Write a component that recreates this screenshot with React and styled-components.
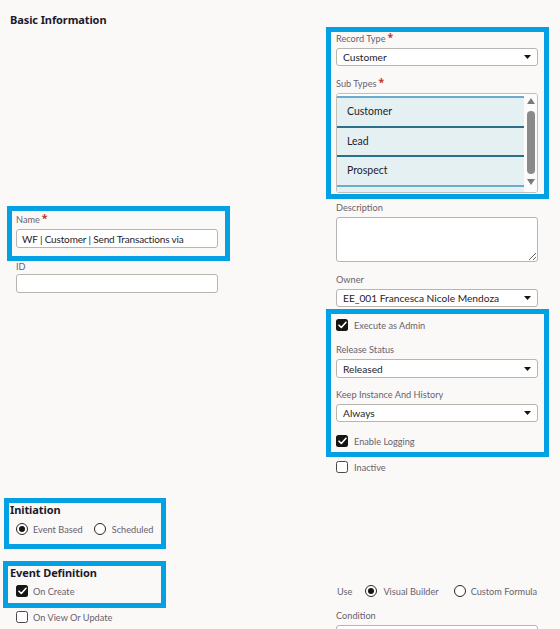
import React from 'react';
import styled, { createGlobalStyle } from 'styled-components';

const Global = createGlobalStyle`
  html, body { margin: 0; padding: 0; background: #faf9f8; }
  body { font-family: Lato, "Noto Sans", sans-serif; color: #161513; }
  * { box-sizing: border-box; }
`;

const Page = styled.div`
  width: 560px;
  height: 629px;
  overflow: hidden;
  background: #faf9f8;
  padding: 13px 0 0 16px;
`;

const Title = styled.h2`
  margin: 0 0 0 ${p => p.$indent || '-6px'};
  font-family: "Noto Sans", sans-serif;
  font-size: 11px;
  font-weight: 700;
  line-height: ${p => p.$lh || '14px'};
  height: ${p => p.$lh || '14px'};
  color: #1c1a2b;
  letter-spacing: -0.1px;
`;

const Grid = styled.div`
  display: grid;
  grid-template-columns: 202px 202px;
  column-gap: 118px;
  align-items: start;
  margin-top: ${p => p.$mt || '0'};
`;

const Column = styled.div`
  display: flex;
  flex-direction: column;
  padding-top: ${p => p.$pt || '0'};
`;

const Highlight = styled.div`
  border: 5px solid #02a1e4;
  margin: ${p => p.$m};
  padding: ${p => p.$p};
  width: ${p => p.$w || 'auto'};
`;

const Label = styled.div`
  font-size: 9.2px;
  line-height: 12px;
  height: 12px;
  color: #67626e;
  margin-top: ${p => p.$mt || '0'};
  margin-bottom: ${p => p.$mb || '3px'};
  white-space: nowrap;
`;

const Req = styled.span`
  font-family: "Noto Sans", sans-serif;
  color: #c5352b;
  font-size: 10.5px;
  font-weight: 700;
  line-height: 0;
  margin-left: 2px;
  position: relative;
  top: -1px;
`;

const TextInput = styled.input`
  display: block;
  width: 100%;
  height: ${p => p.$h || '20px'};
  border: 1px solid #b8b5b1;
  border-radius: 3px;
  background: #fff;
  font-family: Lato, "Noto Sans", sans-serif;
  font-size: ${p => (p.$tight ? '10px' : '10.3px')};
  letter-spacing: ${p => (p.$tight ? '-0.15px' : '0')};
  color: #1f1d28;
  padding: 0 5px;
  outline: none;
`;

const TextArea = styled.textarea`
  display: block;
  width: 100%;
  height: 45px;
  border: 1px solid #b8b5b1;
  border-radius: 3px;
  background: #fff;
  resize: vertical;
  outline: none;
  margin: 0;
`;

const SelectBox = styled.div`
  display: flex;
  align-items: center;
  justify-content: space-between;
  height: ${p => p.$h || '18px'};
  border: 1px solid #b8b5b1;
  border-radius: 3px;
  background: #fff;
  padding: 0 6px 0 6px;
  font-size: 10.2px;
  color: #1f1d28;
  white-space: nowrap;
`;

const Caret = () => (
  <svg width="7" height="4" viewBox="0 0 7 4"><path d="M0 0h7L3.5 4z" fill="#161513" /></svg>
);

const Select = ({ value, h }) => (
  <SelectBox $h={h}>
    <span>{value}</span>
    <Caret />
  </SelectBox>
);

const ListBox = styled.div`
  display: flex;
  height: 100px;
  border: 1px solid #c2bfbb;
  border-radius: 3px;
  background: #fff;
  overflow: hidden;
`;

const Options = styled.div`
  flex: 1;
  padding-top: 2px;
  background: #fff;
`;

const Option = styled.div`
  height: 29.5px;
  border-top: 2px solid ${p => (p.$edge ? '#6aaccb' : '#2b6f89')};
  background: #e5f0f3;
  font-size: 10.5px;
  line-height: 27px;
  padding-left: 10px;
  color: #1f1d28;
`;

const ScrollTrack = styled.div`
  width: 13px;
  display: flex;
  flex-direction: column;
  align-items: center;
  padding: 4px 0 3px;
  background: #fbfbfb;
`;

const Thumb = styled.div`
  width: 8px;
  height: 63px;
  border-radius: 4px;
  background: #8a8a8a;
  margin: 7px 0 5px;
`;

const Arrow = ({ down }) => (
  <svg width="8" height="6" viewBox="0 0 8 6">
    <path d={down ? 'M0 0h8L4 6z' : 'M0 6h8L4 0z'} fill="#7a7a7a" />
  </svg>
);

const OptionRow = styled.div`
  display: flex;
  align-items: center;
  gap: ${p => p.$gap || '6px'};
  height: 14px;
  margin-top: ${p => p.$mt || '0'};
  padding-left: ${p => p.$pl || '0'};
  font-size: 9.2px;
  color: #67626e;
  white-space: nowrap;
`;

const Choice = styled.span`
  display: inline-flex;
  align-items: center;
  gap: ${p => p.$gap || '6px'};
  margin-right: ${p => p.$mr || '0'};
`;

const Box = styled.span`
  width: 12px;
  height: 12px;
  border-radius: 2.5px;
  flex: none;
  display: inline-flex;
  align-items: center;
  justify-content: center;
  background: ${p => (p.$on ? '#161513' : '#fff')};
  border: ${p => (p.$on ? 'none' : '1.3px solid #4a4848')};
`;

const Checkbox = ({ on }) => (
  <Box $on={on}>
    {on && (
      <svg width="9" height="8" viewBox="0 0 9 8">
        <path d="M1 4.2l2.3 2.3L8 1.3" fill="none" stroke="#fff" strokeWidth="1.6" strokeLinecap="round" strokeLinejoin="round" />
      </svg>
    )}
  </Box>
);

const Circle = styled.span`
  width: 12px;
  height: 12px;
  border-radius: 50%;
  flex: none;
  border: 1.3px solid #2a2828;
  background: #fff;
  display: inline-flex;
  align-items: center;
  justify-content: center;
  &::after {
    content: '';
    width: 6px;
    height: 6px;
    border-radius: 50%;
    background: ${p => (p.$on ? '#161513' : 'transparent')};
  }
`;

export default function App() {
  return (
    <>
      <Global />
      <Page>
        <Title>Basic Information</Title>
        <Grid>
          <Column $pt="179px">
            <Highlight $m="0 -12px 0 -9px" $p="3px 7px 8px 4px">
              <Label>Name<Req>*</Req></Label>
              <TextInput $h="19px" $tight readOnly value="WF | Customer | Send Transactions via" />
            </Highlight>
            <Label $mb="1px">ID</Label>
            <TextInput $h="19px" readOnly value="" />
          </Column>
          <Column>
            <Highlight $m="0 -11px 0 -10px" $p="1px 6px 1px 5px">
              <Label>Record Type<Req>*</Req></Label>
              <Select value="Customer" />
              <Label $mt="12px">Sub Types<Req>*</Req></Label>
              <ListBox>
                <Options>
                  <Option $edge>Customer</Option>
                  <Option>Lead</Option>
                  <Option>Prospect</Option>
                  <Option $edge />
                </Options>
                <ScrollTrack>
                  <Arrow />
                  <Thumb />
                  <Arrow down />
                </ScrollTrack>
              </ListBox>
            </Highlight>
            <Label $mt="3px">Description</Label>
            <TextArea readOnly />
            <Label $mt="12px">Owner</Label>
            <Select value="EE_001 Francesca Nicole Mendoza" />
            <Highlight $m="2px -11px 0 -10px" $p="4px 6px 4px 5px">
              <OptionRow>
                <Checkbox on />
                <span>Execute as Admin</span>
              </OptionRow>
              <Label $mt="12px">Release Status</Label>
              <Select value="Released" h="19px" />
              <Label $mt="11px">Keep Instance And History</Label>
              <Select value="Always" />
              <OptionRow $mt="12px">
                <Checkbox on />
                <span>Enable Logging</span>
              </OptionRow>
            </Highlight>
            <OptionRow $mt="3px">
              <Checkbox />
              <span>Inactive</span>
            </OptionRow>
          </Column>
        </Grid>

        <Highlight $m="24px 0 0 -12px" $p="0 0 8px 1px" $w="162px">
          <Title $indent="0">Initiation</Title>
          <OptionRow $mt="5px" $pl="6px" $gap="0">
            <Choice $gap="5px" $mr="11px">
              <Circle $on />
              <span>Event Based</span>
            </Choice>
            <Choice $gap="6px">
              <Circle />
              <span>Scheduled</span>
            </Choice>
          </OptionRow>
        </Highlight>

        <Grid $mt="12px">
          <Column>
            <Highlight $m="0 0 0 -13px" $p="0 0 5px 2px" $w="163px">
              <Title $indent="0" $lh="13px">Event Definition</Title>
              <OptionRow $mt="5px" $pl="6px" $gap="5px">
                <Checkbox on />
                <span>On Create</span>
              </OptionRow>
            </Highlight>
            <OptionRow $mt="2px" $gap="5px">
              <Checkbox />
              <span>On View Or Update</span>
            </OptionRow>
          </Column>
          <Column>
            <OptionRow $mt="23px" $gap="0" $pl="1px">
              <Choice $mr="13px">Use</Choice>
              <Choice $gap="6px" $mr="15px">
                <Circle $on />
                <span>Visual Builder</span>
              </Choice>
              <Choice $gap="5px">
                <Circle />
                <span>Custom Formula</span>
              </Choice>
            </OptionRow>
            <Label $mt="12px">Condition</Label>
            <TextInput $h="20px" readOnly value="" />
          </Column>
        </Grid>
      </Page>
    </>
  );
}
